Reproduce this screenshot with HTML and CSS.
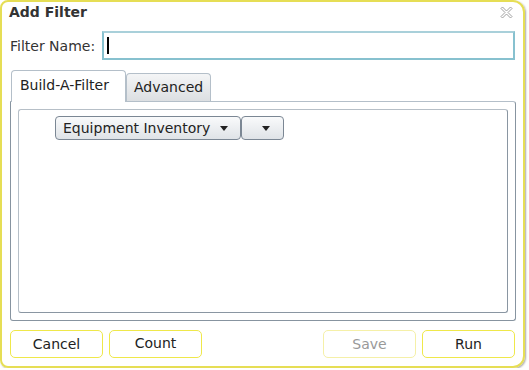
FILE: index.html
```html
<!DOCTYPE html>
<html>
<head>
<meta charset="utf-8">
<link rel="stylesheet" href="styles.css">
</head>
<body>
<div class="dialog">
  <div class="titlebar">
    <span class="title">Add Filter</span>
    <svg class="close" width="13" height="13" viewBox="0 0 13 13">
      <path d="M2.5 1 L6.5 5 L10.5 1 L12 2.5 L8 6.5 L12 10.5 L10.5 12 L6.5 8 L2.5 12 L1 10.5 L5 6.5 L1 2.5 Z" fill="#fff" stroke="#a0a0a0" stroke-width="1" stroke-linejoin="round"/>
    </svg>
  </div>
  <div class="namerow">
    <label class="namelabel">Filter Name:</label>
    <div class="input"><span class="caret"></span></div>
  </div>
  <div class="tabs">
    <div class="tab active">Build-A-Filter</div>
    <div class="tab adv">Advanced</div>
  </div>
  <div class="panel">
    <div class="inner">
      <div class="selects">
        <div class="dd wide"><span>Equipment Inventory</span><span class="arrow"></span></div>
        <div class="dd narrow"><span class="arrow"></span></div>
      </div>
    </div>
  </div>
  <div class="buttons">
    <div class="btn">Cancel</div>
    <div class="btn count">Count</div>
    <div class="spacer"></div>
    <div class="btn disabled">Save</div>
    <div class="btn run">Run</div>
  </div>
</div>
</body>
</html>
```
FILE: styles.css
```css
html, body {
  margin: 0;
  padding: 0;
  background: #fff;
}
body {
  font-family: "DejaVu Sans", Verdana, sans-serif;
  font-size: 14px;
  color: #333;
}
.dialog {
  box-sizing: border-box;
  width: 525px;
  height: 368px;
  border: 2px solid #e6de55;
  border-radius: 8px 12px 12px 8px;
  box-shadow: 1px 1px 2px #aaa;
  display: flex;
  flex-direction: column;
  padding: 0 8px 0 8px;
}
.titlebar {
  display: flex;
  justify-content: space-between;
  align-items: center;
  height: 20px;
  margin-left: -1px;
  margin-bottom: 1px;
}
.title {
  font-weight: bold;
  font-size: 14px;
  color: #333;
}
.close {
  margin-right: 2px;
  margin-top: 1px;
}
.namerow {
  display: flex;
  align-items: center;
  margin-top: 8px;
  height: 29px;
}
.namelabel {
  color: #333;
  margin-right: 7px;
}
.input {
  flex: 1;
  height: 29px;
  box-sizing: border-box;
  border: 2px solid #87c1cf;
  border-top-color: #a9d0da;
  display: flex;
  align-items: center;
  padding-left: 3px;
}
.caret {
  width: 2px;
  height: 17px;
  background: #000;
}
.tabs {
  display: flex;
  align-items: flex-end;
  margin-top: 10px;
  height: 31px;
  padding-left: 1px;
}
.tab {
  box-sizing: border-box;
  border: 1px solid #b4bfc9;
  border-bottom: none;
  border-radius: 4px 4px 0 0;
  height: 28px;
  line-height: 26px;
  background: linear-gradient(#f4f5f6, #dcdfe2);
  color: #222;
  font-size: 14px;
}
.tab.active {
  width: 115px;
  padding-left: 8px;
  height: 32px;
  line-height: 28px;
  background: #fff;
  position: relative;
  top: 1px;
  z-index: 1;
}
.tab.adv {
  width: 85px;
  padding-left: 7px;
}
.panel {
  box-sizing: border-box;
  height: 220px;
  border: 1px solid #8794a0;
  border-top-color: #b4bfc9;
  border-radius: 0 3px 3px 3px;
  padding: 7px;
  margin-right: -1px;
}
.inner {
  box-sizing: border-box;
  height: 100%;
  border: 1px solid #b6bfc7;
  border-right-color: #8a96a2;
  border-bottom-color: #8a96a2;
  border-radius: 3px;
  padding: 6px 0 0 36px;
}
.selects {
  display: flex;
}
.dd {
  box-sizing: border-box;
  height: 24px;
  border: 1px solid #7b8794;
  border-radius: 4px;
  background: linear-gradient(#f9fafb, #dfe3e7);
  display: flex;
  align-items: center;
  justify-content: space-between;
  padding: 0 12px 0 7px;
  font-size: 14px;
  color: #222;
}
.dd.wide {
  width: 186px;
}
.dd.narrow {
  width: 43px;
  justify-content: flex-end;
  padding-right: 13px;
}
.arrow {
  width: 0;
  height: 0;
  border-left: 4px solid transparent;
  border-right: 4px solid transparent;
  border-top: 5px solid #222;
}
.buttons {
  display: flex;
  margin-top: 9px;
  gap: 6px;
}
.spacer {
  flex: 1;
}
.btn {
  box-sizing: border-box;
  width: 93px;
  height: 28px;
  border: 1px solid #efe84a;
  border-radius: 5px;
  text-align: center;
  line-height: 26px;
  color: #222;
  font-size: 14px;
}
.btn.count {
  line-height: 24px;
}
.btn.disabled {
  color: #999;
  border-color: #f5f0a8;
}
```
